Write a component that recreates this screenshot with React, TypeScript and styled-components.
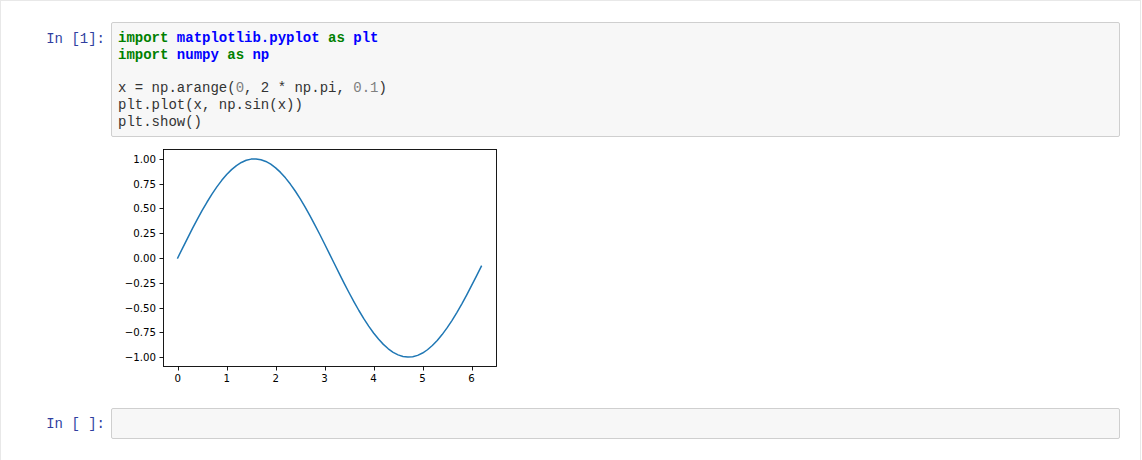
import React from "react";
import styled, { createGlobalStyle } from "styled-components";

const Global = createGlobalStyle`
  html, body { margin: 0; padding: 0; background: #ffffff; }
  body { font-family: "Liberation Sans", Arial, sans-serif; }
`;

const Notebook = styled.div`
  box-sizing: border-box;
  width: 1141px;
  height: 460px;
  border-top: 1px solid #e8e8e8;
  border-left: 1px solid #e8e8e8;
  border-right: 1px solid #e8e8e8;
  padding: 21px 20px 0 0;
  display: flex;
  flex-direction: column;
  gap: 16px;
`;

const Cell = styled.div`
  display: flex;
  flex-direction: column;
`;

const Row = styled.div`
  display: flex;
  align-items: flex-start;
`;

const Prompt = styled.div<{ $top: number }>`
  box-sizing: border-box;
  width: 109px;
  flex: none;
  padding: ${(p) => p.$top}px 5px 0 0;
  text-align: right;
  font-family: "Liberation Mono", "DejaVu Sans Mono", monospace;
  font-size: 14px;
  line-height: 1.2;
  color: #303f9f;
  white-space: pre;
`;

const InputArea = styled.div<{ $top: number; $bottom: number }>`
  flex: 1;
  box-sizing: border-box;
  margin-left: 1px;
  border: 1px solid #cfcfcf;
  border-radius: 2px;
  background: #f7f7f7;
  padding: ${(p) => p.$top}px 6px ${(p) => p.$bottom}px 6px;
  min-height: 31px;
  font-family: "Liberation Mono", "DejaVu Sans Mono", monospace;
  font-size: 14px;
  line-height: 1.2;
  color: #333333;
  white-space: pre;
`;

const Line = styled.div`
  height: 16.8px;
`;

const Tok = styled.span<{ $kind?: "kw" | "name" | "num" }>`
  color: ${(p) =>
    p.$kind === "kw"
      ? "#008000"
      : p.$kind === "name"
      ? "#0000ff"
      : p.$kind === "num"
      ? "#808080"
      : "#333333"};
  font-weight: ${(p) => (p.$kind === "kw" || p.$kind === "name" ? "bold" : "normal")};
`;

const OutputRow = styled.div`
  display: flex;
  padding-left: 110px;
`;

const PlotSvg = styled.svg`
  display: block;
`;

const AX = { left: 162, right: 496, top: 149, bottom: 367 };
const XMIN = -0.31;
const XMAX = 6.51;
const YMIN = -1.0999;
const YMAX = 1.0995;

const px = (x: number) => AX.left + ((x - XMIN) / (XMAX - XMIN)) * (AX.right - AX.left);
const py = (y: number) => AX.bottom - ((y - YMIN) / (YMAX - YMIN)) * (AX.bottom - AX.top);

function Plot() {
  const pts: string[] = [];
  for (let i = 0; i < 63; i++) {
    const x = i * 0.1;
    pts.push(`${(px(x) - 0.5).toFixed(2)},${py(Math.sin(x)).toFixed(2)}`);
  }
  const yTicks = [1, 0.75, 0.5, 0.25, 0, -0.25, -0.5, -0.75, -1];
  const xTicks = [0, 1, 2, 3, 4, 5, 6];
  const fmt = (v: number) => (v < 0 ? "\u2212" + Math.abs(v).toFixed(2) : v.toFixed(2));
  return (
    <PlotSvg width={392} height={255} viewBox="110 137 392 255">
      <rect x={110} y={137} width={392} height={255} fill="#ffffff" />
      <polyline points={pts.join(" ")} fill="none" stroke="#1f77b4" strokeWidth={1.5} strokeLinejoin="round" strokeLinecap="square" />
      <rect
        x={AX.left + 0.5}
        y={AX.top + 0.5}
        width={AX.right - AX.left - 1}
        height={AX.bottom - AX.top - 1}
        fill="none"
        stroke="#000"
        strokeWidth={0.9}
      />
      {yTicks.map((v) => (
        <g key={"y" + v}>
          <line x1={158.5} x2={162.5} y1={Math.round(py(v)) + 0.5} y2={Math.round(py(v)) + 0.5} stroke="#000" strokeWidth={0.9} />
          <text
            x={155}
            y={py(v) + 4}
            textAnchor="end"
            fontFamily="'DejaVu Sans', sans-serif"
            fontSize={10.2}
            fill="#000"
          >
            {fmt(v)}
          </text>
        </g>
      ))}
      {xTicks.map((v) => (
        <g key={"x" + v}>
          <line x1={Math.round(px(v) - 0.5) + 0.5} x2={Math.round(px(v) - 0.5) + 0.5} y1={366.5} y2={370.5} stroke="#000" strokeWidth={0.9} />
          <text
            x={px(v) - 0.5}
            y={381.5}
            textAnchor="middle"
            fontFamily="'DejaVu Sans', sans-serif"
            fontSize={10.2}
            fill="#000"
          >
            {v}
          </text>
        </g>
      ))}
    </PlotSvg>
  );
}

export default function App() {
  return (
    <>
      <Global />
      <Notebook>
        <Cell>
          <Row>
            <Prompt $top={9}>In [1]:</Prompt>
            <InputArea $top={7} $bottom={5}>
              <Line>
                <Tok $kind="kw">import</Tok> <Tok $kind="name">matplotlib.pyplot</Tok> <Tok $kind="kw">as</Tok>{" "}
                <Tok $kind="name">plt</Tok>
              </Line>
              <Line>
                <Tok $kind="kw">import</Tok> <Tok $kind="name">numpy</Tok> <Tok $kind="kw">as</Tok> <Tok $kind="name">np</Tok>
              </Line>
              <Line> </Line>
              <Line>
                x = np.arange(<Tok $kind="num">0</Tok>, 2 * np.pi, <Tok $kind="num">0.1</Tok>)
              </Line>
              <Line>plt.plot(x, np.sin(x))</Line>
              <Line>plt.show()</Line>
            </InputArea>
          </Row>
          <OutputRow>
            <Plot />
          </OutputRow>
        </Cell>
        <Cell>
          <Row>
            <Prompt $top={8}>In [ ]:</Prompt>
            <InputArea $top={6} $bottom={6}> </InputArea>
          </Row>
        </Cell>
      </Notebook>
    </>
  );
}
